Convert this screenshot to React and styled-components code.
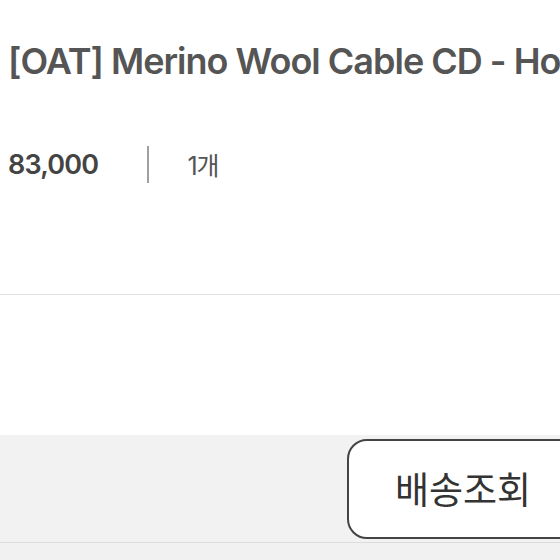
import React from 'react'
import styled, { createGlobalStyle } from 'styled-components'

const GlobalStyle = createGlobalStyle`
body{
    margin: 0;
    background: #f1f1f1;
    font-family: Inter, "Noto Sans CJK KR", sans-serif;
    overflow: hidden;
}
`

const Page = styled.div`
width: 560px;
height: 560px;
display: flex;
flex-direction: column;
overflow: hidden;
`

const InfoSection = styled.div`
height: 295px;
background: #fff;
border-bottom: 1px solid #e0e0e0;
padding-left: 8px;
box-sizing: border-box;
overflow: hidden;
`

const Title = styled.h1`
margin: 0;
padding-top: 38px;
font-size: 36px;
line-height: 46px;
font-weight: 600;
color: #555;
letter-spacing: -1px;
white-space: nowrap;
`

const MetaRow = styled.div`
display: flex;
align-items: center;
margin-top: 60px;
height: 40px;
`

const Price = styled.span`
font-size: 27px;
font-weight: 600;
color: #444;
letter-spacing: -0.8px;
`

const Divider = styled.span`
width: 2px;
height: 37px;
background: #a0a0a0;
margin: 0 38px 0 49px;
`

const Qty = styled.span`
font-size: 25px;
color: #555;
letter-spacing: -1px;
`

const Blank = styled.div`
height: 140px;
background: #fff;
`

const Footer = styled.div`
height: 108px;
background: #f2f2f2;
border-bottom: 1px solid #dcdcdc;
box-sizing: border-box;
display: flex;
justify-content: flex-end;
padding-top: 4px;
`

const TrackButton = styled.button`
width: 232px;
height: 100px;
margin-right: -19px;
background: #fff;
border: 2px solid #444;
border-radius: 20px;
font-family: "Noto Sans CJK KR", sans-serif;
font-size: 37px;
color: #333;
padding: 0 0 2px 0;
cursor: pointer;
`

const App = () => {
    return (
        <Page>
            <GlobalStyle />
            <InfoSection>
                <Title>[OAT] Merino Wool Cable CD - Honey</Title>
                <MetaRow>
                    <Price>83,000</Price>
                    <Divider />
                    <Qty>1개</Qty>
                </MetaRow>
            </InfoSection>
            <Blank />
            <Footer>
                <TrackButton>배송조회</TrackButton>
            </Footer>
        </Page>
    )
}

export default App
